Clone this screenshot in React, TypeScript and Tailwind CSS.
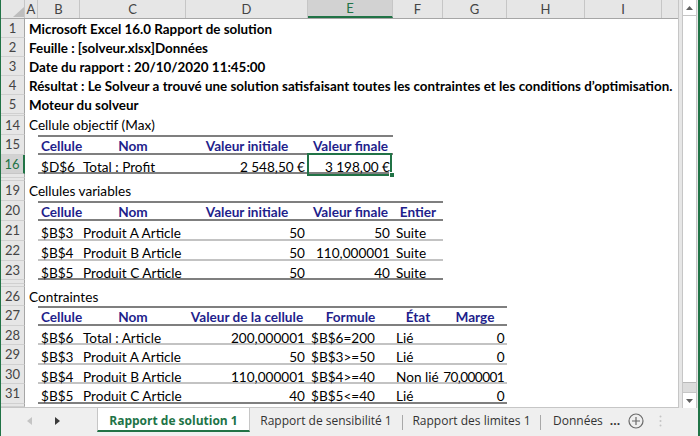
import React from 'react';

const W = ['w-[42px]', 'w-[106px]', 'w-[122px]', 'w-[85px]', 'w-[50px]', 'w-[64px]'];

function RH({ n, sel }: { n?: string; sel?: boolean }) {
  if (sel) {
    return (
      <div className="w-[24px] shrink-0 flex items-center justify-center bg-[#d2d2d2] text-[#217346] border-r-2 border-r-[#217346] border-b border-b-[#c6c6c6] text-[13px] leading-none">
        {n}
      </div>
    );
  }
  return (
    <div className="w-[24px] shrink-0 flex items-center justify-center overflow-hidden bg-[#e6e6e6] text-[#444444] border-r border-r-[#a6a6a6] border-b border-b-[#d0d0d0] text-[13px] leading-none">
      {n}
    </div>
  );
}

function Gap({ h }: { h: string }) {
  return (
    <div className={`flex shrink-0 ${h}`}>
      <RH />
      <div className="flex-1" />
    </div>
  );
}

function TextRow({ n, h, pt, bold, text }: { n: string; h: string; pt: string; bold?: boolean; text: string }) {
  return (
    <div className={`flex shrink-0 ${h}`}>
      <RH n={n} />
      <div
        className={`flex-1 min-w-0 pl-[4px] leading-[16px] whitespace-nowrap overflow-hidden ${pt} ${
          bold ? 'font-bold text-[13.4px]' : ''
        }`}
      >
        {text}
      </div>
    </div>
  );
}

type Kind = 'head' | 'mid' | 'last';

function TableRow({
  n,
  h,
  kind,
  cells,
  aligns,
  sel,
}: {
  n: string;
  h: string;
  kind: Kind;
  cells: string[];
  aligns: string[];
  sel?: boolean;
}) {
  const border =
    kind === 'head'
      ? 'border-t-2 border-b-2 border-[#7f7f7f] font-bold text-[#1f1f8c]'
      : kind === 'last'
      ? 'border-b-2 border-[#7f7f7f]'
      : 'border-b-2 border-[#c3c3c3]';
  const pt = kind === 'head' ? 'pt-[1px]' : 'pt-[4px]';
  return (
    <div className={`flex shrink-0 ${h}`}>
      <RH n={n} sel={sel} />
      <div className="w-[13px] shrink-0" />
      <div className={`flex ${border}`}>
        {cells.map((c, i) => (
          <div
            key={i}
            className={`relative shrink-0 flex items-start px-[3px] whitespace-nowrap leading-[16px] ${W[i]} ${aligns[i]} ${pt}`}
          >
            <span className={i === 5 && kind !== 'head' ? 'shrink-0 tracking-[-0.6px]' : 'shrink-0'}>{c}</span>
            {sel && i === 3 && (
              <>
                <div className="absolute left-[-1px] right-[1px] top-[-2px] bottom-[-4px] border-2 border-[#217346]" />
                <div className="absolute right-[-2px] bottom-[-6px] w-[6px] h-[6px] bg-[#217346] border border-white" />
              </>
            )}
          </div>
        ))}
      </div>
    </div>
  );
}

const COLS: { k: string; w: string; sel?: boolean }[] = [
  { k: 'A', w: 'w-[13px]' },
  { k: 'B', w: 'w-[42px]' },
  { k: 'C', w: 'w-[106px]' },
  { k: 'D', w: 'w-[122px]' },
  { k: 'E', w: 'w-[85px]', sel: true },
  { k: 'F', w: 'w-[50px]' },
  { k: 'G', w: 'w-[64px]' },
  { k: 'H', w: 'w-[78px]' },
  { k: 'I', w: 'w-[77px]' },
];

function ColHeader() {
  return (
    <div className="flex shrink-0 h-[19px] bg-[#e6e6e6] border-b border-b-[#a6a6a6]">
      <div className="relative w-[24px] shrink-0 border-r border-r-[#c6c6c6]">
        <svg className="absolute left-[12px] top-[7px]" width="11" height="10" viewBox="0 0 11 10">
          <polygon points="11,0 11,10 0,10" fill="#bdbdbd" />
        </svg>
      </div>
      {COLS.map((c) =>
        c.sel ? (
          <div
            key={c.k}
            className={`${c.w} shrink-0 flex items-center justify-center bg-[#d2d2d2] text-[#217346] border-r border-r-[#c6c6c6] border-b-2 border-b-[#217346] text-[13px] leading-none pt-[1px]`}
          >
            {c.k}
          </div>
        ) : (
          <div
            key={c.k}
            className={`${c.w} shrink-0 flex items-center justify-center text-[#444444] border-r border-r-[#c6c6c6] text-[13px] leading-none`}
          >
            {c.k}
          </div>
        )
      )}
      <div className="flex-1" />
    </div>
  );
}

const L = 'justify-start';
const C = 'justify-center';
const R = 'justify-end';

function Sheet() {
  return (
    <div className="w-[678px] h-[408px] shrink-0 flex flex-col overflow-hidden bg-white border-r border-r-[#c6c6c6] border-b border-b-[#c6c6c6]">
      <ColHeader />
      <TextRow n="1" h="h-[19px]" pt="pt-[2px]" bold text="Microsoft Excel 16.0 Rapport de solution" />
      <TextRow n="2" h="h-[19px]" pt="pt-[2px]" bold text="Feuille : [solveur.xlsx]Données" />
      <TextRow n="3" h="h-[19px]" pt="pt-[2px]" bold text="Date du rapport : 20/10/2020 11:45:00" />
      <TextRow
        n="4"
        h="h-[19px]"
        pt="pt-[2px]"
        bold
        text="Résultat : Le Solveur a trouvé une solution satisfaisant toutes les contraintes et les conditions d’optimisation."
      />
      <TextRow n="5" h="h-[19px]" pt="pt-[2px]" bold text="Moteur du solveur" />
      <Gap h="h-[2px]" />
      <TextRow n="14" h="h-[19px]" pt="pt-[1px]" text="Cellule objectif (Max)" />
      <TableRow
        n="15"
        h="h-[20px]"
        kind="head"
        cells={['Cellule', 'Nom', 'Valeur initiale', 'Valeur finale']}
        aligns={[L, C, C, C]}
      />
      <TableRow
        n="16"
        h="h-[19px]"
        kind="last"
        sel
        cells={['$D$6', 'Total : Profit', '2\u202F548,50\u202F€', '3\u202F198,00\u202F€']}
        aligns={[L, L, R, R]}
      />
      <Gap h="h-[4px]" />
      <Gap h="h-[3px]" />
      <TextRow n="19" h="h-[20px]" pt="pt-[2px]" text="Cellules variables" />
      <TableRow
        n="20"
        h="h-[20px]"
        kind="head"
        cells={['Cellule', 'Nom', 'Valeur initiale', 'Valeur finale', 'Entier']}
        aligns={[L, C, C, C, C]}
      />
      <TableRow
        n="21"
        h="h-[20px]"
        kind="mid"
        cells={['$B$3', 'Produit A Article', '50', '50', 'Suite']}
        aligns={[L, L, R, R, L]}
      />
      <TableRow
        n="22"
        h="h-[20px]"
        kind="mid"
        cells={['$B$4', 'Produit B Article', '50', '110,000001', 'Suite']}
        aligns={[L, L, R, R, L]}
      />
      <TableRow
        n="23"
        h="h-[19px]"
        kind="last"
        cells={['$B$5', 'Produit C Article', '50', '40', 'Suite']}
        aligns={[L, L, R, R, L]}
      />
      <Gap h="h-[4px]" />
      <Gap h="h-[3px]" />
      <TextRow n="26" h="h-[19px]" pt="pt-[2px]" text="Contraintes" />
      <TableRow
        n="27"
        h="h-[20px]"
        kind="head"
        cells={['Cellule', 'Nom', 'Valeur de la cellule', 'Formule', 'État', 'Marge']}
        aligns={[L, C, C, C, C, C]}
      />
      <TableRow
        n="28"
        h="h-[19px]"
        kind="mid"
        cells={['$B$6', 'Total : Article', '200,000001', '$B$6=200', 'Lié', '0']}
        aligns={[L, L, R, L, L, R]}
      />
      <TableRow
        n="29"
        h="h-[20px]"
        kind="mid"
        cells={['$B$3', 'Produit A Article', '50', '$B$3>=50', 'Lié', '0']}
        aligns={[L, L, R, L, L, R]}
      />
      <TableRow
        n="30"
        h="h-[19px]"
        kind="mid"
        cells={['$B$4', 'Produit B Article', '110,000001', '$B$4>=40', 'Non lié', '70,000001']}
        aligns={[L, L, R, L, L, R]}
      />
      <TableRow
        n="31"
        h="h-[20px]"
        kind="last"
        cells={['$B$5', 'Produit C Article', '40', '$B$5<=40', 'Lié', '0']}
        aligns={[L, L, R, L, L, R]}
      />
      <div className="flex flex-1">
        <RH />
        <div className="flex-1" />
      </div>
    </div>
  );
}

function VScroll() {
  return (
    <div className="w-[15px] h-[408px] shrink-0 flex flex-col bg-[#dcdcdc] border-x border-[#c6c6c6]">
      <div className="h-[16px] shrink-0 bg-white border-b border-[#c6c6c6] flex items-center justify-center">
        <svg width="7" height="4" viewBox="0 0 7 4">
          <path d="M0 4 L3.5 0 L7 4 Z" fill="#606060" />
        </svg>
      </div>
      <div className="h-[367px] shrink-0 bg-white border-b border-[#b9b9b9]" />
      <div className="flex-1" />
      <div className="h-[16px] shrink-0 bg-white border-t border-[#c6c6c6] flex items-center justify-center">
        <svg width="7" height="4" viewBox="0 0 7 4">
          <path d="M0 0 L3.5 4 L7 0 Z" fill="#606060" />
        </svg>
      </div>
    </div>
  );
}

function TabBar() {
  return (
    <div className="h-[28px] shrink-0 flex items-start bg-[#efefef] [font-family:'Open_Sans',sans-serif] text-[12px] text-[#333333]">
      <div className="w-[96px] h-[26px] shrink-0 flex items-center pl-[26px]">
        <svg width="5" height="8" viewBox="0 0 5 8">
          <path d="M5 0 L0 4 L5 8 Z" fill="#c4c4c4" />
        </svg>
        <svg className="ml-[23px]" width="5" height="8" viewBox="0 0 5 8">
          <path d="M0 0 L5 4 L0 8 Z" fill="#3a3a3a" />
        </svg>
      </div>
      <div className="w-[153px] h-[24px] shrink-0 bg-white border-x border-x-[#c6c6c6] border-b-2 border-b-[#217346] text-center font-bold text-[#217346] pt-[4px] leading-[17px] whitespace-nowrap">
        Rapport de solution 1
      </div>
      <div className="w-[152px] h-[24px] shrink-0 text-center pt-[4px] leading-[17px] whitespace-nowrap">
        Rapport de sensibilité 1
      </div>
      <div className="w-px h-[15px] mt-[7px] shrink-0 bg-[#a8a8a8]" />
      <div className="w-[137px] h-[24px] shrink-0 text-center pt-[4px] leading-[17px] whitespace-nowrap">
        Rapport des limites 1
      </div>
      <div className="w-px h-[15px] mt-[7px] shrink-0 bg-[#a8a8a8]" />
      <div className="h-[24px] shrink-0 pl-[12px] pt-[4px] leading-[17px] whitespace-nowrap">Données</div>
      <div className="h-[24px] shrink-0 pl-[7px] pt-[4px] leading-[17px] font-bold whitespace-nowrap">...</div>
      <div className="h-[26px] shrink-0 pl-[8px] flex items-center">
        <svg width="16" height="16" viewBox="0 0 16 16">
          <circle cx="8" cy="8" r="7" fill="none" stroke="#6a6a6a" strokeWidth="1.2" />
          <path d="M8 4 V12 M4 8 H12" stroke="#6a6a6a" strokeWidth="1.2" />
        </svg>
      </div>
      <div className="h-[26px] shrink-0 pl-[15px] flex items-center">
        <svg width="3" height="12" viewBox="0 0 3 12">
          <circle cx="1.5" cy="1.5" r="1" fill="#c4c4c4" />
          <circle cx="1.5" cy="6" r="1" fill="#c4c4c4" />
          <circle cx="1.5" cy="10.5" r="1" fill="#c4c4c4" />
        </svg>
      </div>
    </div>
  );
}

export default function App() {
  return (
    <div className="w-[700px] h-[436px] overflow-hidden flex flex-col bg-[#e6e6e6] border-l border-l-[#217346] border-r-2 border-r-[#217346] [font-family:Lato,sans-serif] text-[13.6px] text-black">
      <div className="flex h-[408px] shrink-0">
        <Sheet />
        <div className="w-[3px] shrink-0" />
        <VScroll />
        <div className="w-[1px] shrink-0" />
      </div>
      <TabBar />
    </div>
  );
}
